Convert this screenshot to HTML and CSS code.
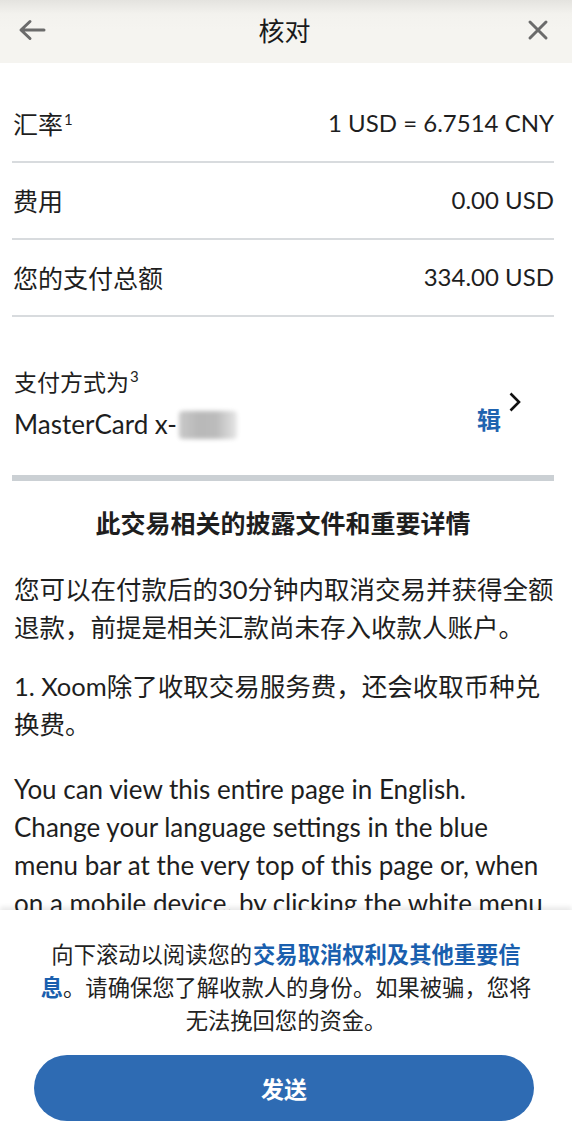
FILE: index.html
```html
<!DOCTYPE html>
<html lang="zh-CN">
<head>
<meta charset="utf-8">
<link rel="stylesheet" href="styles.css">
</head>
<body>
<header class="topbar">
  <svg class="icon back" width="30" height="24" viewBox="0 0 30 24"><path d="M27 12H5M13 3.5L4 12l9 8.5" fill="none" stroke="#6b6b6b" stroke-width="3" stroke-linecap="round" stroke-linejoin="round"/></svg>
  <h1 class="title">核对</h1>
  <svg class="icon close" width="24" height="24" viewBox="0 0 24 24"><path d="M4 4l16 16M20 4L4 20" fill="none" stroke="#6b6b6b" stroke-width="3" stroke-linecap="round"/></svg>
</header>
<main class="content">
  <div class="row"><span>汇率<sup>1</sup></span><span class="val">1 USD = 6.7514 CNY</span></div>
  <div class="row"><span>费用</span><span class="val">0.00 USD</span></div>
  <div class="row"><span>您的支付总额</span><span class="val">334.00 USD</span></div>
  <div class="pay">
    <div class="pay-text">
      <div>支付方式为<sup>3</sup></div>
      <div class="card">MasterCard x-<span class="blur"></span></div>
    </div>
    <div class="edit"><span class="edit-label">辑</span>
      <svg class="chev" width="14" height="22" viewBox="0 0 14 22"><path d="M2.5 2.5l8.5 8.5-8.5 8.5" fill="none" stroke="#111" stroke-width="2.6"/></svg>
    </div>
  </div>
  <h2 class="heading">此交易相关的披露文件和重要详情</h2>
  <p class="para p1">您可以在付款后的30分钟内取消交易并获得全额退款，前提是相关汇款尚未存入收款人账户。</p>
  <p class="para">1. Xoom除了收取交易服务费，还会收取币种兑换费。</p>
  <p class="para en">You can view this entire page in English. Change your language settings in the blue menu bar at the very top of this page or, when on a mobile device, by clicking the white menu</p>
</main>
<footer class="sheet">
  <div class="notice">
    <span class="line"><span class="plain">向下滚动以阅读您的</span><a class="link first">交易取消权利及其他重要信</a></span>
    <span class="line"><a class="link">息</a>。请确保您了解收款人的身份。如果被骗，您将</span>
    <span class="line">无法挽回您的资金。</span>
  </div>
  <button class="send">发送</button>
</footer>
</body>
</html>
```
FILE: styles.css
```css
* { box-sizing: border-box; }
html, body { margin: 0; padding: 0; }
body {
  width: 572px;
  height: 1133px;
  overflow: hidden;
  background: #fff;
  color: #1e1e1e;
  font-family: "Lato", "Noto Sans CJK SC", sans-serif;
  display: flex;
  flex-direction: column;
}
.topbar {
  flex: 0 0 63px;
  background: linear-gradient(#e4e3df 0px, #f3f2ee 14px, #f5f4f0 30px);
  display: flex;
  align-items: center;
  justify-content: space-between;
  padding: 0 22px 4px 17px;
}
.title {
  margin: 0 4px 0 0;
  font-weight: 400;
  font-size: 26px;
  color: #1a1a1a;
  font-family: "Noto Sans CJK SC", sans-serif;
}
.content {
  flex: 1 1 auto;
  min-height: 0;
  overflow: hidden;
  padding: 23px 18px 0 12px;
}
.row {
  height: 77px;
  border-bottom: 2px solid #d8dbde;
  display: flex;
  justify-content: space-between;
  align-items: center;
  font-size: 25px;
  padding: 0 0 2px 1px;
}
.val { font-size: 24px; }
sup { font-size: 15px; line-height: 0; vertical-align: 9px; margin-left: 1px; }
.pay {
  height: 164px;
  border-bottom: 6px solid #cbd0d4;
  display: flex;
  justify-content: space-between;
  align-items: flex-start;
  padding: 49px 0 0 2px;
  font-size: 23px;
}
.pay-text { display: flex; flex-direction: column; gap: 9px; line-height: 33px; }
.card { display: flex; align-items: center; font-size: 26px; }
.blur {
  display: inline-block;
  width: 58px;
  height: 28px;
  margin-left: 2px;
  background: linear-gradient(90deg, #c9c9c9, #b8b8b8 35%, #bcbcbc 65%, #e6e6e6);
  filter: blur(2px);
  border-radius: 4px;
}
.edit { display: flex; align-items: flex-start; padding-top: 25px; margin-right: 32px; }
.edit-label { color: #1e63b0; font-size: 24px; font-weight: 700; margin-top: 14px; line-height: 30px; }
.chev { margin-left: 7px; margin-top: 0; }
.heading {
  margin: 24px 0 0;
  text-align: center;
  font-size: 25px;
  font-weight: 700;
  line-height: 36px;
}
.para {
  margin: 21px 0 0 2px;
  font-size: 25.5px;
  line-height: 38px;
}
.para.p1 { margin-top: 29px; }
.para.en { font-size: 26px; margin-top: 27px; }
.sheet {
  flex: 0 0 223px;
  position: relative;
  z-index: 1;
  background: #fff;
  box-shadow: 0 -3px 5px rgba(0,0,0,0.09);
  display: flex;
  flex-direction: column;
  align-items: center;
}
.notice {
  margin-top: 27px;
  display: flex;
  flex-direction: column;
  align-items: center;
  font-size: 22.3px;
  line-height: 33px;
  color: #222;
  font-family: "Noto Sans CJK SC", sans-serif;
}
.line { display: block; white-space: nowrap; }
.link { color: #1a5fae; font-weight: 700; }
.link.first { margin-left: 1px; }
.send {
  margin: 19px 4px 0 0;
  width: 500px;
  height: 66px;
  border: none;
  border-radius: 33px;
  background: #2e6bb3;
  color: #fff;
  font-size: 23px;
  font-weight: 700;
  font-family: "Noto Sans CJK SC", sans-serif;
}
```
